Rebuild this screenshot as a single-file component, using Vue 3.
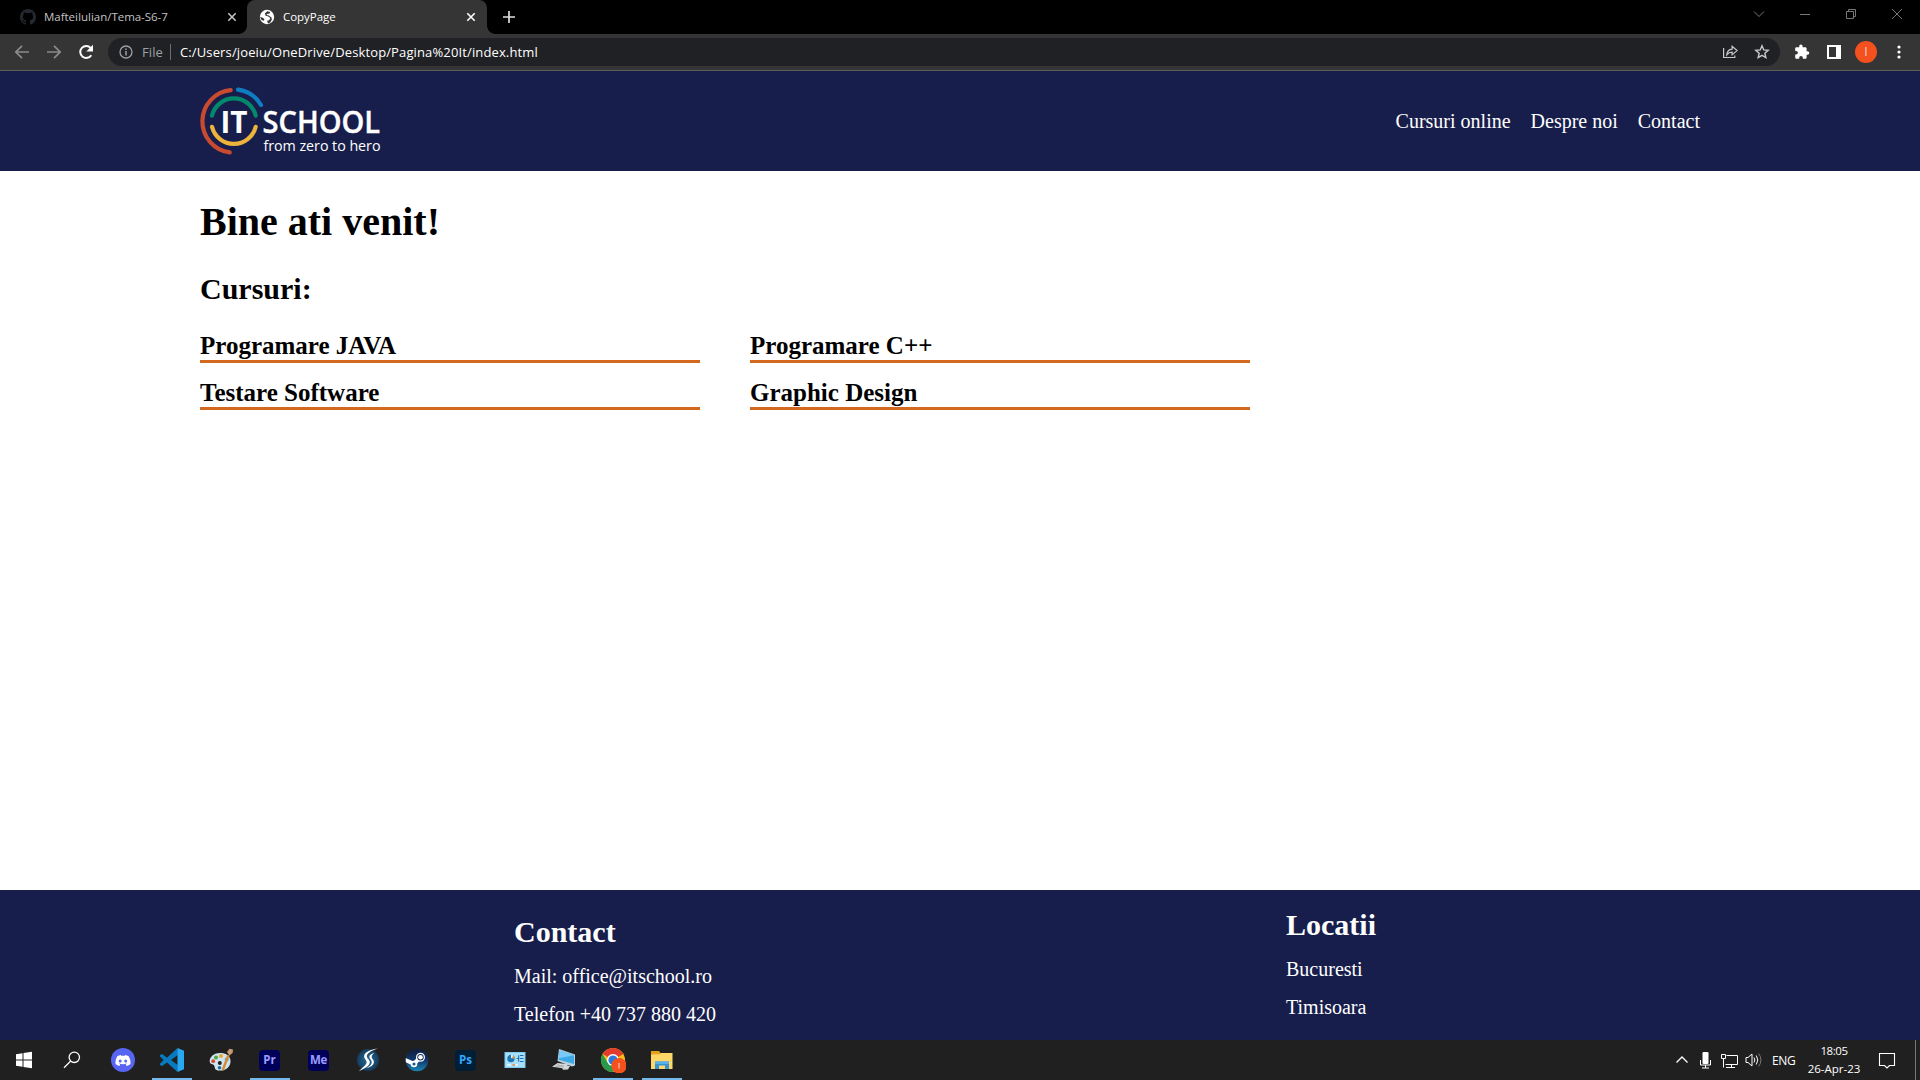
<script setup>
const navLinks = ['Cursuri online', 'Despre noi', 'Contact']
const courses = ['Programare JAVA', 'Programare C++', 'Testare Software', 'Graphic Design']
</script>

<template>
  <div class="screen">
    <div class="tabstrip">
      <div class="tab idle">
        <svg class="fav" viewBox="0 0 16 16"><path fill="#24292f" d="M8 0C3.58 0 0 3.58 0 8c0 3.54 2.29 6.53 5.47 7.59.4.07.55-.17.55-.38v-1.49c-2.01.37-2.53-.49-2.69-.94-.09-.23-.48-.94-.82-1.13-.28-.15-.68-.52-.01-.53.63-.01 1.08.58 1.23.82.72 1.21 1.87.87 2.33.66.07-.52.28-.87.51-1.07-1.78-.2-3.64-.89-3.64-3.95 0-.87.31-1.59.82-2.15-.08-.2-.36-1.02.08-2.12 0 0 .67-.21 2.2.82a7.5 7.5 0 0 1 4 0c1.53-1.04 2.2-.82 2.2-.82.44 1.1.16 1.92.08 2.12.51.56.82 1.27.82 2.15 0 3.07-1.87 3.75-3.65 3.95.29.25.54.73.54 1.48v2.2c0 .21.15.46.55.38A8 8 0 0 0 16 8c0-4.42-3.58-8-8-8z"/></svg>
        <span class="tab-title t1">MafteiIulian/Tema-S6-7</span>
        <svg class="x" viewBox="0 0 10 10"><path d="M1.3 1.3l7.4 7.4M8.7 1.3L1.3 8.7" stroke="#c8c8c8" stroke-width="1.5"/></svg>
      </div>
      <div class="tab active">
        <svg class="fav" viewBox="0 0 16 16"><circle cx="8" cy="8" r="7.2" fill="#fff"/><path fill="#353535" d="M8.300 2.200L6 4.200l.4 2.400 3 .9 1.900 1.600-1.100 2.200-2.100.5.900 2.700 2.200-.9 1.600-2.800-.3-2.200-2.700-2-2.100-.5.200-1.200 2.700-.5.600-1.500zM1 7.800l3.200 1.100 1.300 1.700-1 1.200-2-.9z"/></svg>
        <span class="tab-title t2">CopyPage</span>
        <svg class="x" viewBox="0 0 10 10"><path d="M1.3 1.3l7.4 7.4M8.7 1.3L1.3 8.7" stroke="#fff" stroke-width="1.6"/></svg>
      </div>
      <svg class="plus" viewBox="0 0 12 12"><path d="M6 0v12M0 6h12" stroke="#dedede" stroke-width="1.7"/></svg>
      <svg class="winctl" viewBox="0 0 150 12" fill="none" stroke="#777">
        <path d="M1 3.5l5 5 5-5M47 6.5h10M93.5 3.5h7v7h-7zM95.500 3.500v-2h7v7h-2M139 1l10 10M149 1l-10 10"/>
      </svg>
    </div>

    <div class="toolbar">
      <svg class="navicons" viewBox="0 0 80 16" fill="none">
        <path d="M15 8H2M8 1.800L1.800 8 8 14.200M33 8h13M40 1.800L46.200 8 40 14.200" stroke="#8b8b8b" stroke-width="1.7"/>
        <path d="M77.300 11.200a6 6 0 1 1-.6-7.300" stroke="#fff" stroke-width="2"/><path d="M79 .8v6.700h-6.700z" fill="#fff"/>
      </svg>
      <div class="omnibox">
        <svg class="info" viewBox="0 0 14 14"><circle cx="7" cy="7" r="6" fill="none" stroke="#9aa0a6" stroke-width="1.3"/><path d="M7 6v4.500M7 3.500v1.500" stroke="#9aa0a6" stroke-width="1.500"/></svg>
        <span class="file">File</span>
        <i class="bar"></i>
        <span class="url">C:/Users/joeiu/OneDrive/Desktop/Pagina%20It/index.html</span>
        <svg class="boxicons" viewBox="0 0 50 16" fill="none" stroke="#c7c9cc" stroke-width="1.2">
          <path d="M1.600 4v9.500h11.200v-2"/><path d="M4.800 10.800c.3-3.700 2.200-5.500 5.300-5.700V2.300l5 4.300-5 4.200V8.200c-2.300 0-3.900.7-5.300 2.600z"/>
          <path stroke-width="1.400" d="M40 1.800l1.750 4.100 4.450.4-3.350 2.950 1 4.350L40 11.300l-3.850 2.300 1-4.350L33.800 6.300l4.450-.4z"/>
        </svg>
      </div>
      <svg class="ext" viewBox="0 0 16 16"><path fill="#fff" d="M13.600 7.300h-1V4.500c0-.7-.6-1.300-1.300-1.300H8.600V2.300a1.700 1.700 0 0 0-3.400 0v.9H2.500c-.7 0-1.300.6-1.300 1.300V7h.9a1.800 1.800 0 0 1 0 3.600h-.9v2.800c0 .7.6 1.300 1.300 1.300h2.700v-1a1.800 1.800 0 0 1 3.600 0v1h2.500c.7 0 1.300-.6 1.300-1.300v-2.700h1a1.700 1.700 0 0 0 0-3.400z"/></svg>
      <i class="panel"></i>
      <span class="avatar">I</span>
      <svg class="dots" viewBox="0 0 4 14" fill="#fff"><circle cx="2" cy="2" r="1.600"/><circle cx="2" cy="7" r="1.600"/><circle cx="2" cy="12" r="1.600"/></svg>
    </div>

    <header>
      <svg class="logo" viewBox="0 0 184 72">
        <g fill="none" stroke-width="4.200" stroke-linecap="round">
          <path d="M30.700 5.200a31.300 31.300 0 0 0-1 62.200" stroke="#c84b31"/>
          <path d="M38 4.700a31.600 31.600 0 0 1 23 15.300" stroke="#107dc2"/>
          <path d="M12 30.600a22.500 22.500 0 0 1 43.700 0" stroke="#04886b"/>
          <path d="M12 41.800a22.500 22.500 0 0 0 43.700 0" stroke="#eeb33b"/>
        </g>
        <g fill="#fff" font-family="'Open Sans', sans-serif">
          <text x="20.500" y="47.500" font-size="30.500" font-weight="700" textLength="27" lengthAdjust="spacingAndGlyphs">IT</text>
          <text x="62.600" y="47.500" font-size="30" font-weight="600" stroke="#fff" stroke-width=".4" textLength="117.500" lengthAdjust="spacingAndGlyphs">SCHOOL</text>
          <text x="63.500" y="66.300" font-size="14.300" textLength="117" lengthAdjust="spacing">from zero to hero</text>
        </g>
      </svg>
      <nav><a v-for="l in navLinks" :key="l">{{ l }}</a></nav>
    </header>

    <main>
      <h1>Bine ati venit!</h1>
      <h2>Cursuri:</h2>
      <div class="courses"><h3 v-for="c in courses" :key="c">{{ c }}</h3></div>
    </main>

    <footer>
      <div class="contact"><h2>Contact</h2><p>Mail: office@itschool.ro</p><p>Telefon +40 737 880 420</p></div>
      <div class="places"><h2>Locatii</h2><p>Bucuresti</p><p>Timisoara</p></div>
    </footer>

    <div class="taskbar">
      <div class="apps">
        <div class="app"><svg viewBox="0 0 26 26" fill="#fff"><path d="M5 7.200l6.500-1v6.300H5zM12.500 6l8.500-1.200v7.700h-8.500zM5 13.500h6.500v6.300l-6.500-1zM12.500 13.500H21v7.700L12.500 20z"/></svg></div>
        <div class="app"><svg viewBox="0 0 26 26" fill="none" stroke="#fff" stroke-width="1.300"><circle cx="15.300" cy="10.300" r="5.200"/><path d="M11.500 14.200L5 20.700"/></svg></div>
        <div class="app"><svg viewBox="0 0 26 26"><circle cx="13" cy="13" r="12" fill="#5865f2"/><path fill="#fff" d="M18.400 8.900a13 13 0 0 0-3.200-1l-.5.900a12 12 0 0 0-3.500 0l-.5-.9a13 13 0 0 0-3.200 1c-1.700 2.700-2.300 5.400-2 8a13 13 0 0 0 3.900 2l.9-1.500-1.300-.7.3-.2c2.400 1.100 5 1.100 7.400 0l.3.200-1.300.7.900 1.500a13 13 0 0 0 3.900-2c.3-3-.5-5.600-2.100-8z"/><circle cx="10.200" cy="14" r="1.500" fill="#5865f2"/><circle cx="15.700" cy="14" r="1.500" fill="#5865f2"/></svg></div>
        <div class="app running"><svg viewBox="0 0 26 26"><path fill="#087bc0" d="M18.500 1L8 10.700 3.200 7 1 8.100v1.400l3.600 3.500L1 16.700v1.400l2.200 1 4.800-3.600L18.500 25l.5-6.800-7-5.200 7-5.200z"/><path fill="#29a9f2" d="M18.500 1L25 3.800v18.400L18.500 25z"/></svg></div>
        <div class="app"><svg viewBox="0 0 26 26"><path fill="#cfe4ee" d="M12 6C5 6 1.500 10.700 1.700 14.500c.2 3.300 3.600 2.200 4.500 3.900s-.2 5 5.500 5.200c7 .3 11.300-5 10.800-10.100C22 8.500 18 6 12 6z"/><circle cx="8" cy="10.500" r="2" fill="#49a942"/><circle cx="13" cy="8.900" r="2" fill="#eea62a"/><circle cx="5.200" cy="14.200" r="1.900" fill="#d94836"/><circle cx="18.700" cy="12.500" r="2" fill="#47abd8"/><circle cx="11.800" cy="16" r="2" fill="#202020"/><circle cx="11.500" cy="20.800" r="1.800" fill="#1b71a8"/><path d="M20.500 8L14.800 23" stroke="#d88932" stroke-width="2.400"/><path d="M19 5l2.500-3.300L25 2.500l-.3 3.200-3.200 2.700z" fill="#c79b70"/></svg></div>
        <div class="app running"><b class="adobe">Pr</b></div>
        <div class="app"><b class="adobe me">Me</b></div>
        <div class="app"><svg viewBox="0 0 26 26"><defs><radialGradient id="sg"><stop stop-color="#256e9b"/><stop offset="1" stop-color="#143c5d"/></radialGradient></defs><circle cx="13" cy="13" r="11" fill="url(#sg)"/><path fill="#fff" d="M22.800 1.500C14 3 9.500 5.500 9.100 9c-.3 3.200 3.700 4.300 2.200 7.500-1 2.400-4.300 4.300-7.500 7.800 5.500-2.500 10.700-5 11-8.700.3-3.300-4.200-4.300-2.700-7.500C13.200 5.300 17 3.800 22.800 1.500zM19.500 5.500c-3.700 1.600-5.300 2.700-5.100 4.700.2 1.800 3.300 3.500 2 6.500-1 2.400-3.600 3.600-6 4.800 4.700-1 8.200-3.100 8.500-6.200.3-3-2.700-3.600-2.200-5.900.2-1.300 1.300-2.500 2.800-3.900z"/></svg></div>
        <div class="app"><svg viewBox="0 0 26 26"><defs><linearGradient id="st" x2="0" y2="1"><stop stop-color="#101d3c"/><stop offset=".5" stop-color="#12346a"/><stop offset="1" stop-color="#1787b8"/></linearGradient><clipPath id="sc"><circle cx="13" cy="13" r="11.300"/></clipPath></defs><circle cx="13" cy="13" r="11.300" fill="url(#st)"/><g clip-path="url(#sc)"><path d="M0 12.500l10 4.300 6-6.300" stroke="#fff" stroke-width="4" fill="none"/><circle cx="10" cy="17" r="3.300" fill="#fff"/><circle cx="10" cy="17" r="1.600" fill="#1b5b93"/></g><circle cx="16.500" cy="10.200" r="4.500" fill="#fff"/><circle cx="16.500" cy="10.200" r="3.200" fill="#14274f"/><circle cx="16.500" cy="10.200" r="2.300" fill="#fff"/></svg></div>
        <div class="app"><b class="adobe ps">Ps</b></div>
        <div class="app"><svg viewBox="0 0 26 26"><path fill="#7fcdf1" d="M2.500 5h21v16h-21z"/><path fill="#a9dff8" d="M3.500 6h19v14h-19z"/><circle cx="9" cy="11.500" r="3.700" fill="#1876b9"/><path fill="#e9f7ff" d="M9 11.500V7.800a3.700 3.700 0 0 1 2.600 1.100z"/><path fill="#ef9b36" d="M9 11.500l2.600-2.600a3.700 3.700 0 0 1 1.100 2.600z"/><path d="M14.500 11.500h2M16.700 8.200v6.600M18 8.500h3.500M18 11.500h3.500M18 14.500h3.500" stroke="#1a70ae" stroke-width="1.100"/><path d="M5 18h4m4 0h3" stroke="#e8f8ff" stroke-width="1.500"/><path d="M10.500 18H13" stroke="#e18e3b" stroke-width="1.600"/></svg></div>
        <div class="app"><svg viewBox="0 0 26 26"><path fill="#b8d2de" d="M8 2l16 5.500v11l-3 1L6.500 14z"/><path fill="#3fa9e8" d="M8.800 3.400L23 8.200V17L7.500 12.800z"/><path fill="#78cbf8" d="M8.800 3.400L23 8.200l-15.300 3z"/><path fill="#d5d9da" d="M1 19.800L6.500 16l11 1.300-5.500 4zM11 21l5-2.500 3 .5-2 3.500-5 .3z"/><path stroke="#8c9699" d="M4 19.500l9-1M6 17.500l7 3" stroke-width=".6"/></svg></div>
        <div class="app running"><svg class="chrome" viewBox="0 0 26 26"><circle cx="13" cy="13" r="12" fill="#fbbc18"/><path fill="#e33b2e" d="M13 13L2.600 7A12 12 0 0 1 23.400 7z"/><path fill="#279b4c" d="M2.600 7A12 12 0 0 0 13 25l5.200-9H13L7.800 16z"/><circle cx="13" cy="13" r="6" fill="#fff"/><circle cx="13" cy="13" r="4.600" fill="#2879e0"/><circle cx="19" cy="18.800" r="7.700" fill="#f4511e"/><path d="M19 16v5.600" stroke="#ffc4b0" stroke-width="1.200"/></svg></div>
        <div class="app running"><svg viewBox="0 0 26 26"><path fill="#e5a01d" d="M2 4h8l1.500 2H23v4H2z"/><path fill="#ffd668" d="M2 7.500l9-.2 1-1.300h11.500v16H2z"/><path fill="#3893d4" d="M6 22v-7.500h14V22h-4v-3.500h-6V22z"/><path fill="#56b2e9" d="M6 14.500h14V17H6z"/></svg></div>
      </div>
      <div class="tray">
        <svg class="trayicons" viewBox="0 0 92 24" fill="none" stroke="#fff">
          <path d="M1.500 14.500L7 9l5.500 5.500" stroke-width="1.300"/>
          <rect x="27.500" y="4" width="6" height="12" rx="1.200" fill="#fff" stroke="none"/><path d="M25.500 12v5h10v-5M30.500 17v3M27 20h7"/>
          <path d="M51.500 7.500h11v9h-12M46.500 6.500h4v4h-4zM48.500 10.500v9M56.500 16.500v3M51 19.500h9"/>
          <path d="M71 9.500h2l4-3.500v12l-4-3.500h-2zM79 9.500q1.700 2.500 0 5M81.300 7.500q3 4.500 0 9"/><path stroke="#777" d="M83.700 5.500q4.500 6.500 0 13"/>
        </svg>
        <span class="lang">ENG</span>
        <span class="clock"><span>18:05</span><span class="date">26-Apr-23</span></span>
        <svg class="note" viewBox="0 0 18 18"><path d="M1.500 2.500h15v12h-5L9 17l-2.500-2.500h-5z" fill="none" stroke="#fff" stroke-width="1.100"/></svg>
        <i class="peek"></i>
      </div>
    </div>
  </div>
</template>

<style>
body { margin: 0; overflow: hidden; }
</style>

<style scoped>
.screen { width: 1920px; height: 1080px; display: flex; flex-direction: column; background: #fff; font-family: "Liberation Serif", "Times New Roman", serif; box-sizing: border-box; overflow: hidden; }
svg { display: block; flex: none; }
h1, h2, h3, p { margin: 0; }

.tabstrip { height: 34px; flex: none; background: #000; display: flex; align-items: center; padding-left: 7px; box-sizing: border-box; font-family: "Open Sans", sans-serif; font-size: 11.5px; }
.tab { width: 240px; height: 34px; box-sizing: border-box; display: flex; align-items: center; padding: 0 11px 0 12px; color: #c3c3c3; }
.tab.idle { padding: 0 10px 0 13px; }
.tab.active { position: relative; background: #353535; color: #fff; border-radius: 8px 8px 0 0; }
.tab.active::before, .tab.active::after { content: ""; position: absolute; bottom: 0; width: 8px; height: 8px; }
.tab.active::before { left: -8px; background: radial-gradient(circle at 0 0, transparent 7.500px, #353535 8px); }
.tab.active::after { right: -8px; background: radial-gradient(circle at 100% 0, transparent 7.500px, #353535 8px); }
.fav { width: 16px; height: 16px; margin-right: 8px; }
.tab-title { flex: 1; white-space: nowrap; line-height: 16px; }
.t1 { letter-spacing: -.03px; }
.t2 { letter-spacing: -.03px; }
.x { width: 10px; height: 10px; }
.plus { width: 12px; height: 12px; margin-left: 16px; }
.winctl { width: 150px; height: 12px; margin-left: auto; margin-right: 17px; margin-bottom: 6px; }

.toolbar { height: 37px; flex: none; box-sizing: border-box; border-bottom: 1px solid #5d5e59; background: #353535; display: flex; align-items: center; font-family: "Open Sans", sans-serif; }
.navicons { width: 80px; height: 16px; margin: 0 14px; }
.omnibox { width: 1672px; height: 28px; border-radius: 14px; background: #202124; display: flex; align-items: center; font-size: 13px; color: #fff; }
.info { width: 14px; height: 14px; margin-left: 11px; }
.file { width: 28px; margin-left: 9px; color: #9aa0a6; letter-spacing: .1px; }
.bar { width: 1px; height: 16px; background: #6b6e72; margin-right: 9px; }
.url { letter-spacing: .13px; white-space: nowrap; }
.boxicons { width: 50px; height: 16px; margin-left: auto; margin-right: 8px; }
.ext { width: 16px; height: 16px; margin-left: 14px; }
.panel { width: 14px; height: 14px; box-sizing: border-box; border: 2px solid #fff; border-right-width: 5px; margin-left: 17px; }
.avatar { width: 22px; height: 22px; border-radius: 50%; background: #f4511e; color: #ffd9cc; font-size: 12px; line-height: 22px; text-align: center; margin-left: 14px; }
.dots { width: 4px; height: 14px; margin-left: 19.500px; }

header { height: 100px; flex: none; background: #181e4b; padding: 0 220px 0 200px; display: flex; align-items: center; justify-content: space-between; }
.logo { width: 184px; height: 72px; }
nav { display: flex; gap: 20px; color: #fff; font-size: 20px; line-height: 23px; padding-top: 1px; }

main { flex: 1; padding-left: 200px; color: #000; }
h1 { font-size: 40px; line-height: 46px; padding-top: 28px; }
main h2 { font-size: 30px; line-height: 34px; margin-top: 27px; }
.courses { width: 1050px; margin-top: 26px; display: grid; grid-template-columns: 500px 500px; gap: 16px 50px; }
h3 { font-size: 25px; line-height: 28px; border-bottom: 3px solid #d2691e; }

footer { height: 150px; flex: none; background: #181e4b; color: #fff; display: flex; font-size: 20px; }
.contact { width: 772px; margin-left: 514px; padding-top: 25px; }
.places { padding-top: 18px; }
footer h2 { font-size: 30px; line-height: 34px; }
footer p { line-height: 22px; margin-top: 16px; }

.taskbar { height: 40px; flex: none; background: #202020; display: flex; justify-content: space-between; color: #fff; font-family: "Open Sans", sans-serif; }
.apps { display: flex; }
.app { width: 40px; height: 40px; margin-left: 9px; display: flex; align-items: center; justify-content: center; box-sizing: border-box; }
.app:first-child { margin-left: 4px; }
.app:nth-child(2) { margin-left: 8px; }
.app:nth-child(3) { margin-left: 11px; }
.app.running { box-shadow: inset 0 -2px #76b9ed; }
.app svg { width: 26px; height: 26px; }
.adobe { width: 21px; height: 21px; border-radius: 4px; background: #00005b; color: #9d9dff; font-size: 11.500px; line-height: 19px; text-align: center; margin-right: 1px; }
.me { letter-spacing: -.4px; }
.ps { background: #001e36; color: #31a8ff; }
.tray { display: flex; align-items: center; font-size: 12px; }
.trayicons { width: 92px; height: 24px; }
.lang { width: 23px; margin-left: 5px; letter-spacing: -.4px; }
.clock { width: 56px; margin-left: 11px; display: flex; flex-direction: column; align-items: center; line-height: 18px; font-size: 11.500px; letter-spacing: -.45px; white-space: nowrap; }
.date { letter-spacing: 0; }
.note { width: 18px; height: 18px; margin-left: 16px; }
.peek { width: 1px; height: 40px; background: #777; margin: 0 4px 0 19px; }
</style>
